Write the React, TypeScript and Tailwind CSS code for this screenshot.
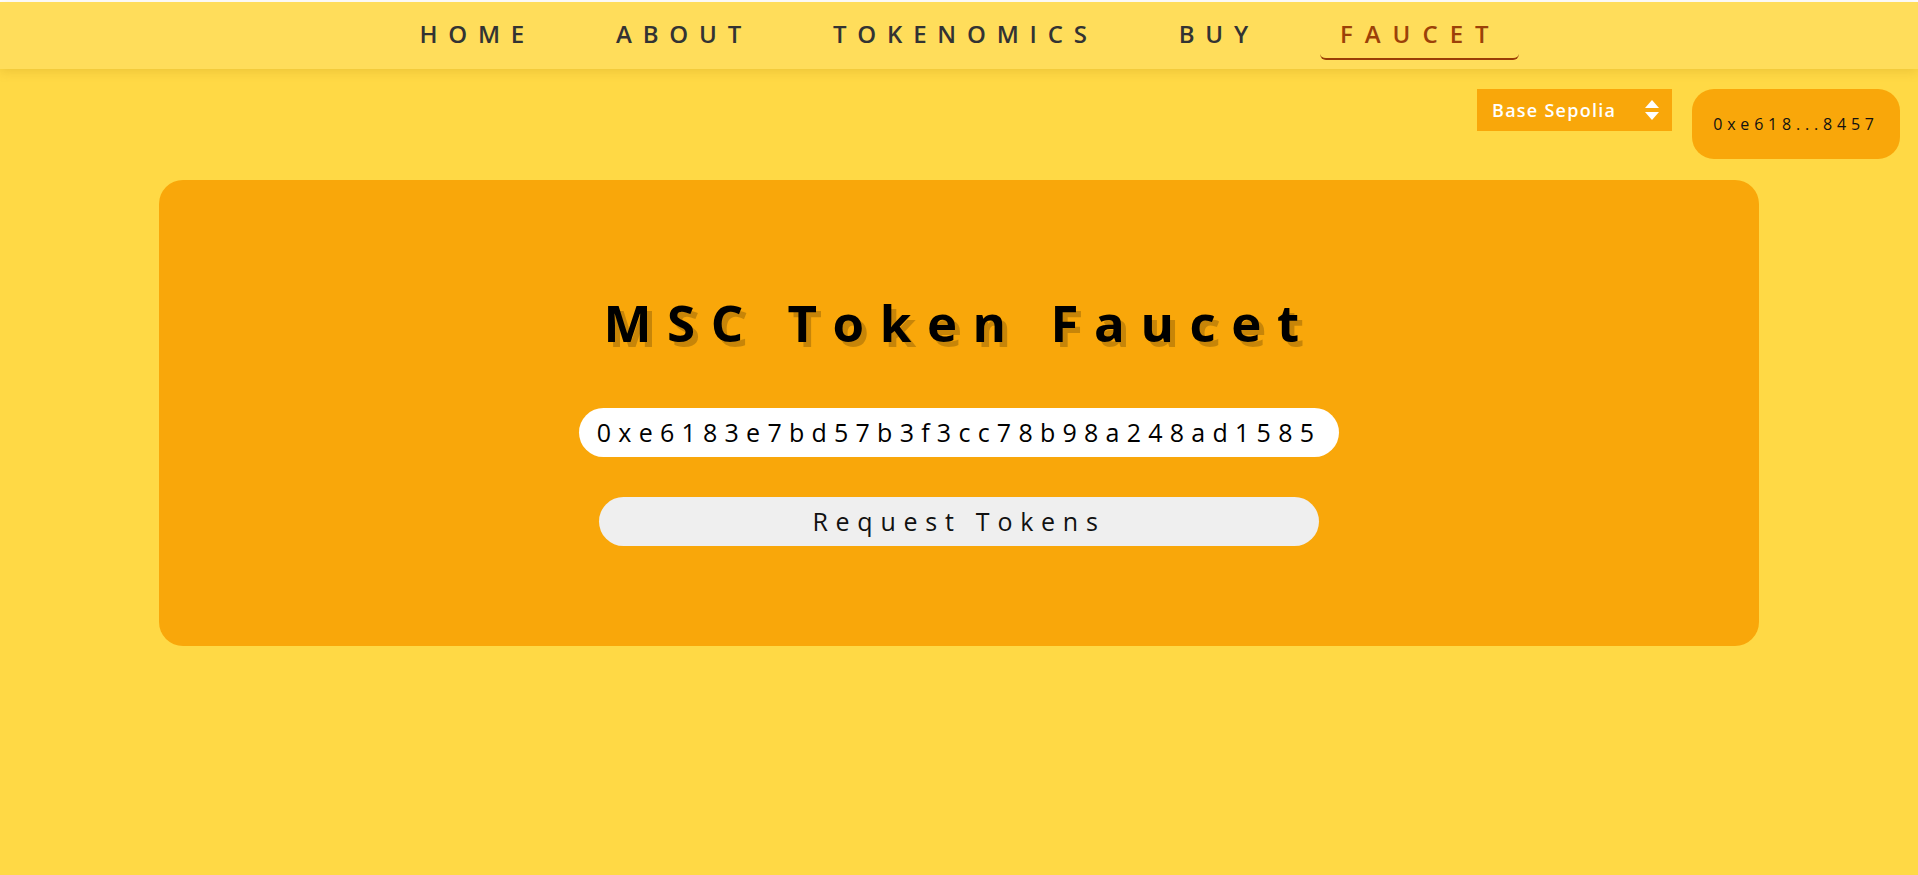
import React from "react";

const links = ["HOME", "ABOUT", "TOKENOMICS", "BUY", "FAUCET"];
const active = "FAUCET";

function UpDown() {
  return (
    <svg width="16" height="22" viewBox="0 0 16 22" className="shrink-0">
      <path d="M8 1 L15 9 L1 9 Z" fill="white" />
      <path d="M1 13 L15 13 L8 21 Z" fill="white" />
    </svg>
  );
}

export default function App() {
  return (
    <div className="min-h-screen bg-[#ffd945] font-['Open_Sans',sans-serif]">
      <div className="h-[2px] bg-white" />

      {/* top nav */}
      <nav className="relative z-10 h-[67px] bg-[#ffdd5b] shadow-[0_3px_10px_rgba(160,110,0,0.18)]">
        <ul className="flex justify-center gap-[41px] pt-[20px]">
          {links.map((l) => (
            <li key={l}>
              <a
                className={
                  l === active
                    ? "block pl-5 pr-[18px] pb-3 text-[24px] leading-[24px] font-semibold tracking-[0.5em] text-[#9c4108] border-b-2 border-[#9a3d06] rounded-md"
                    : "block px-5 pb-3 text-[24px] leading-[24px] font-semibold tracking-[0.45em] text-[#333333] border-b-2 border-transparent"
                }
              >
                {l}
              </a>
            </li>
          ))}
        </ul>
      </nav>

      {/* wallet row */}
      <div className="flex justify-end items-start gap-5 pt-5 pr-[18px]">
        <div className="w-[195px] h-[42px] bg-[#f9a70a] flex items-center justify-between pl-[15px] pr-[12px]">
          <span className="text-white text-[18px] font-semibold tracking-[0.07em]">Base Sepolia</span>
          <UpDown />
        </div>
        <button className="w-[208px] h-[70px] rounded-[22px] bg-[#f9a70a] text-[#111] text-[16px] font-medium tracking-[0.3em]">
          0xe618...8457
        </button>
      </div>

      {/* faucet card */}
      <div className="mx-auto mt-[21px] w-[1600px] rounded-[24px] bg-[#f9a70a] flex flex-col items-center pt-[117px] pb-[100px]">
        <h1 className="text-[51px] leading-[51px] font-bold tracking-[0.305em] text-black [text-shadow:5px_5px_0_rgba(0,0,0,0.2)]">
          MSC Token Faucet
        </h1>
        <div className="mt-[60px] w-[760px] h-[49px] rounded-full bg-white flex items-center justify-center">
          <span className="text-[25px] font-medium tracking-[0.29em] text-black">
            0xe6183e7bd57b3f3cc78b98a248ad1585
          </span>
        </div>
        <button className="mt-[40px] w-[720px] h-[49px] rounded-full bg-[#efefef] text-[25px] tracking-[0.31em] text-[#111]">
          Request Tokens
        </button>
      </div>
    </div>
  );
}
